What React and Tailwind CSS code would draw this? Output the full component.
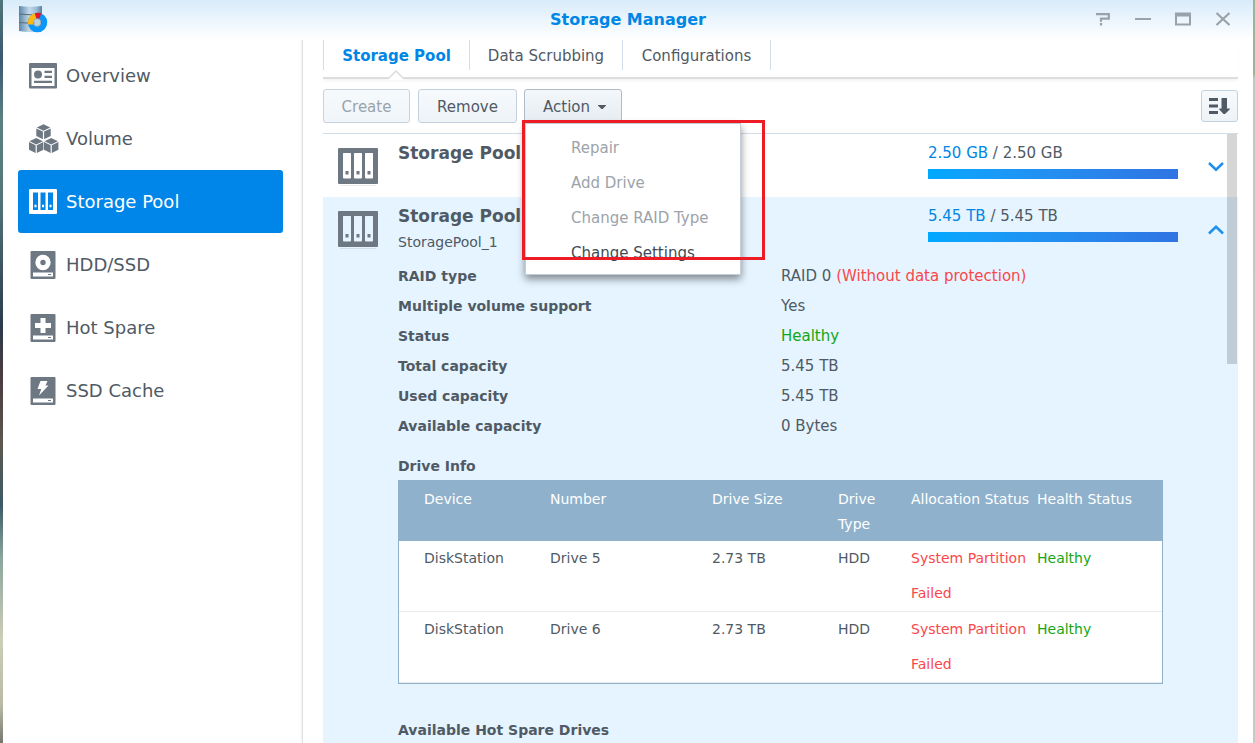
import React from "react";

const SIDEBAR_ITEMS = [
  { label: "Overview", Icon: OverviewIcon },
  { label: "Volume", Icon: VolumeIcon },
  { label: "Storage Pool", Icon: PoolIcon, active: true },
  { label: "HDD/SSD", Icon: HddIcon },
  { label: "Hot Spare", Icon: HotSpareIcon },
  { label: "SSD Cache", Icon: CacheIcon },
];

const MENU_ITEMS = [
  { label: "Repair", disabled: true },
  { label: "Add Drive", disabled: true },
  { label: "Change RAID Type", disabled: true },
  { label: "Change Settings", disabled: false },
];

const DRIVES = ["Drive 5", "Drive 6"];

function OverviewIcon() {
  return (
    <svg width="28" height="28" viewBox="0 0 28 28" fill="currentColor" aria-hidden="true">
      <path fillRule="evenodd" d="M1 1h26a1 1 0 0 1 1 1v23.500a1 1 0 0 1-1 1H1a1 1 0 0 1-1-1V2a1 1 0 0 1 1-1zM2.500 6v18h23V6z" />
      <circle cx="9" cy="12.500" r="4" />
      <path d="M15.500 8.700h7.500v2.200h-7.500zM15.500 13.700h7.500v2.200h-7.500zM5 18.700h18v2.300H5z" />
    </svg>
  );
}

function Cube({ x, y }) {
  return (
    <g transform={`translate(${x} ${y})`}>
      <path d="M7.200 0l6.700 3.200-6.700 3.200L.5 3.200z" />
      <path d="M0 4.100l6.600 3.200v7.700L0 11.800z" />
      <path d="M14.400 4.100L7.800 7.300v7.700l6.600-3.200z" />
    </g>
  );
}

function VolumeIcon() {
  return (
    <svg width="30" height="30" viewBox="0 0 30 30" fill="currentColor" aria-hidden="true">
      <Cube x={7.3} y={0.3} />
      <Cube x={0} y={14} />
      <Cube x={15} y={14} />
    </svg>
  );
}

function PoolIcon() {
  return (
    <svg width="28" height="28" viewBox="0 0 28 28" fill="currentColor" aria-hidden="true">
      <path
        fillRule="evenodd"
        d="M1 1h26a1 1 0 0 1 1 1v23a1 1 0 0 1-1 1H1a1 1 0 0 1-1-1V2a1 1 0 0 1 1-1zM4 4.500v17.500h5V4.500zM11.500 4.500v17.500h5V4.500zM19 4.500v17.500h5V4.500z"
      />
      <path d="M5.500 16.800h2v2.500h-2zM13 16.800h2v2.500h-2zM20.500 16.800h2v2.500h-2z" />
    </svg>
  );
}

function DriveBase({ children }) {
  return (
    <svg width="28" height="28" viewBox="0 0 28 28" fill="none" aria-hidden="true">
      <rect x="1.500" y="0" width="25" height="28" rx="1" fill="currentColor" />
      <rect x="4" y="21.500" width="20" height="4" fill="#fff" />
      <rect x="19" y="23" width="3" height="1" fill="currentColor" />
      {children}
    </svg>
  );
}

function HddIcon() {
  return (
    <DriveBase>
      <circle cx="14" cy="11.500" r="5.200" stroke="#fff" strokeWidth="5" />
    </DriveBase>
  );
}

function HotSpareIcon() {
  return (
    <DriveBase>
      <path d="M11.500 4h5v5H22v5h-5.500v5h-5v-5H6V9h5.500z" fill="#fff" />
    </DriveBase>
  );
}

function CacheIcon() {
  return (
    <DriveBase>
      <path d="M11.500 4h7L16.500 8.500h3L10 18.500l2.300-6.500H8.500z" fill="#fff" />
    </DriveBase>
  );
}

function PoolRowIcon() {
  return (
    <svg width="40" height="38" viewBox="0 0 40 38" className="block shrink-0 text-[#6d7883]" aria-hidden="true">
      <path d="M2 37.500h36" stroke="#000" strokeOpacity="0.080" />
      <path
        fill="currentColor"
        fillRule="evenodd"
        d="M1 0h38a1 1 0 0 1 1 1v34a1 1 0 0 1-1 1H1a1 1 0 0 1-1-1V1a1 1 0 0 1 1-1zM5.500 5a.5.5 0 0 0-.5.5v24a1 1 0 0 0 1 1h6a1 1 0 0 0 1-1v-24a.5.5 0 0 0-.5-.5zM16.500 5a.5.5 0 0 0-.5.5v24a1 1 0 0 0 1 1h6a1 1 0 0 0 1-1v-24a.5.5 0 0 0-.5-.5zM27.500 5a.5.5 0 0 0-.5.5v24a1 1 0 0 0 1 1h6a1 1 0 0 0 1-1v-24a.5.5 0 0 0-.5-.5z"
      />
      <path fill="currentColor" d="M7.500 23h3v3.500h-3zM18.500 23h3v3.500h-3zM29.500 23h3v3.500h-3z" />
    </svg>
  );
}

function AppLogo() {
  return (
    <svg width="30" height="28" viewBox="0 0 30 28" aria-hidden="true">
      <defs>
        <linearGradient id="cyl" x1="0" x2="1" y1="0" y2="0">
          <stop offset="0" stopColor="#5d86a8" />
          <stop offset="0.450" stopColor="#c3d9ea" />
          <stop offset="0.750" stopColor="#9dbdd6" />
          <stop offset="1" stopColor="#56809f" />
        </linearGradient>
      </defs>
      <path d="M0 0q11 1.500 23 0v25q-12 2-23 0z" fill="url(#cyl)" />
      <path d="M0 8q11 1.500 23 0M0 16.500q11 1.500 23 0" stroke="#5b6b78" strokeWidth="1" fill="none" />
      <circle cx="18.500" cy="16.500" r="7" fill="none" stroke="#0a97f7" strokeWidth="5.500" />
      <path d="M8.800 16.500l.3 2h5.400v-2a4 4 0 0 1 3-4l-1.700-5.300a9.700 9.700 0 0 0-7 9.300z" fill="#fbb713" />
      <path d="M15.800 7.200a9.700 9.700 0 0 1 6.400.2L20.500 12.500a4.500 4.500 0 0 0-3 0z" fill="#e5132b" />
      <circle cx="18.500" cy="16.500" r="3.200" fill="#b9d0e0" />
    </svg>
  );
}

function WindowControls() {
  return (
    <div className="flex items-center gap-3 pb-[2px] text-[#98a2ab]">
      <button type="button" aria-label="Help" className="flex size-7 items-center justify-center">
        <svg width="16" height="14" viewBox="0 0 16 14" fill="none" stroke="currentColor" strokeWidth="2.200">
          <path d="M1 2.100h12.800v4.600H6v3" />
          <path d="M6 11v2.500" />
        </svg>
      </button>
      <button type="button" aria-label="Minimize" className="flex size-7 items-center justify-center">
        <svg width="16" height="14" viewBox="0 0 16 14" fill="none" stroke="currentColor" strokeWidth="2">
          <path d="M0 7h16" />
        </svg>
      </button>
      <button type="button" aria-label="Maximize" className="flex size-7 items-center justify-center">
        <svg width="16" height="14" viewBox="0 0 16 14" fill="none" stroke="currentColor" strokeWidth="2">
          <path d="M1 1.500h14v11H1z" />
          <path d="M1 3h14" strokeWidth="3" />
        </svg>
      </button>
      <button type="button" aria-label="Close" className="flex size-7 items-center justify-center">
        <svg width="16" height="14" viewBox="0 0 16 14" fill="none" stroke="currentColor" strokeWidth="2.200">
          <path d="M1.500 1l13 12M14.500 1l-13 12" />
        </svg>
      </button>
    </div>
  );
}

function Sidebar() {
  return (
    <nav className="w-[300px] shrink-0 border-r border-[#dfe2e4] pt-1 pr-[19px] pl-[15px] shadow-[inset_-3px_0_2px_-2px_#f1f2f3]">
      {SIDEBAR_ITEMS.map(({ label, Icon, active }) => (
        <a
          key={label}
          href="#"
          className={
            active
              ? "flex h-[63px] items-center rounded-[3px] bg-[#0086e8] pl-[11px] text-lg text-white"
              : "flex h-[63px] items-center pl-[11px] text-lg text-[#505a64]"
          }
        >
          <span className={active ? "flex w-[37px] text-white" : "flex w-[37px] text-[#6d7883]"}>
            <Icon />
          </span>
          {label}
        </a>
      ))}
    </nav>
  );
}

function Tabs() {
  return (
    <div className="relative h-[39px] border-b-2 border-[#dcdddf] shadow-[0_3px_3px_-1px_#f3f3f3]">
      <div className="flex h-[30px] items-center border-l border-[#d3deea] text-[15px]">
        <button type="button" className="h-full w-[146px] border-r border-[#d3deea] pt-[2px] font-bold text-[#0086e5]">
          Storage Pool
        </button>
        <button type="button" className="h-full w-[153px] border-r border-[#d3deea] pt-[2px]">
          Data Scrubbing
        </button>
        <button type="button" className="h-full w-[148px] border-r border-[#d3deea] pt-[2px]">
          Configurations
        </button>
      </div>
      <svg className="absolute top-[30px] left-[64px]" width="18" height="10" viewBox="0 0 18 10" aria-hidden="true">
        <path d="M0 10L9 1l9 9z" fill="#fff" />
        <path d="M0 8.500h1.500L9 1l7.500 7.500H18" fill="none" stroke="#dcdddf" strokeWidth="1.500" />
      </svg>
    </div>
  );
}

function ActionMenu() {
  return (
    <div className="relative">
      <button
        type="button"
        aria-haspopup="menu"
        aria-expanded="true"
        className="flex h-[34px] w-[98px] items-center gap-2 rounded-t-[3px] border border-[#b0bcc8] bg-linear-to-b from-[#f3f7fa] to-[#e6ecf1] pt-[2px] pl-[18px]"
      >
        Action
        <svg width="8" height="4" viewBox="0 0 8 4" fill="currentColor" aria-hidden="true">
          <path d="M0 0h8v.6L4.600 4H3.400L0 .6z" />
        </svg>
      </button>
      <div
        role="menu"
        className="absolute top-[34px] left-px z-10 w-[216px] border border-[#c3ced9] bg-white pt-[7px] pb-[3px] shadow-[0_4px_8px_rgba(0,0,0,0.45)]"
      >
        {MENU_ITEMS.map(({ label, disabled }) => (
          <button
            key={label}
            type="button"
            role="menuitem"
            disabled={disabled}
            className="block h-[35px] w-full pl-[45px] text-left text-[#414b55] disabled:text-[#9ca3aa]"
          >
            {label}
          </button>
        ))}
      </div>
      <div className="pointer-events-none absolute top-[31px] -left-[2px] z-20 h-[140px] w-[243px] border-3 border-[#ed1c24]" />
    </div>
  );
}

function Toolbar() {
  return (
    <div className="flex items-center pt-[10px] pb-[10px] text-[15px]">
      <button
        type="button"
        disabled
        className="mr-2 h-[34px] w-[87px] rounded-[3px] border border-[#c6d2de] bg-linear-to-b from-[#f6fafd] to-[#f0f5f9] pt-[2px] text-[#9ba3ab]"
      >
        Create
      </button>
      <button
        type="button"
        className="mr-[7px] h-[34px] w-[99px] rounded-[3px] border border-[#c3d0dd] bg-linear-to-b from-[#f6fafd] to-[#eef3f8] pt-[2px]"
      >
        Remove
      </button>
      <ActionMenu />
      <button
        type="button"
        aria-label="Sort"
        className="ml-auto flex h-8 w-[37px] items-center justify-center rounded-[3px] border border-[#c3d0dd] bg-linear-to-b from-[#f6fafd] to-[#eef3f8]"
      >
        <svg width="21" height="16" viewBox="0 0 21 16" fill="currentColor" aria-hidden="true">
          <path d="M0 0h9v3H0zM0 6.500h9v3H0zM0 13h9v3H0zM12.500 0h5.500v10.500h2.700v1L16 16h-1.500l-4.200-4.500v-1h2.200z" />
        </svg>
      </button>
    </div>
  );
}

function PoolHeader({ title, subtitle, used, total, expanded }) {
  return (
    <div className="flex h-[63px] items-start pr-[14px] pl-[15px]">
      <div className="pt-[14px]">
        <PoolRowIcon />
      </div>
      <div className="flex-1 pt-[7px] pl-5">
        <h2 className="text-[17px] leading-6 font-bold">{title}</h2>
        {subtitle && <p className="text-sm leading-7">{subtitle}</p>}
      </div>
      <div className="w-[250px] pt-[9px] text-[15px] leading-5">
        <span className="text-[#0086e5]">{used}</span> / {total}
        <div className="mt-[6px] h-[10px] bg-linear-to-r from-[#00a8ff] to-[#2f74e2]" />
      </div>
      <button
        type="button"
        aria-label={expanded ? "Collapse" : "Expand"}
        className="mt-[24px] ml-[30px] flex h-[18px] w-4 items-center text-[#1e8fec]"
      >
        <svg width="16" height="10" viewBox="0 0 16 10" fill="none" stroke="currentColor" strokeWidth="2.500" aria-hidden="true">
          {expanded ? <path d="M1 8.500L8 1.800l7 6.700" /> : <path d="M1 1l7 6.700L15 1" />}
        </svg>
      </button>
    </div>
  );
}

function Detail({ label, children }) {
  return (
    <div className="flex h-[30px] items-center">
      <dt className="w-[383px] text-sm font-bold">{label}</dt>
      <dd className="text-[15px]">{children}</dd>
    </div>
  );
}

function DriveTable() {
  return (
    <table className="w-full table-fixed border-separate border-spacing-0 border border-[#8fb1cc] bg-white text-left text-sm">
      <colgroup>
        <col className="w-[151px]" />
        <col className="w-[162px]" />
        <col className="w-[126px]" />
        <col className="w-[73px]" />
        <col className="w-[126px]" />
        <col />
      </colgroup>
      <thead>
        <tr className="bg-[#8fb1cc] align-top leading-[25px] text-white [&>th]:pt-[6px] [&>th]:pb-[4px] [&>th]:font-normal">
          <th className="pl-[25px]">Device</th>
          <th>Number</th>
          <th>Drive Size</th>
          <th className="pr-6">Drive Type</th>
          <th className="whitespace-nowrap">Allocation Status</th>
          <th>Health Status</th>
        </tr>
      </thead>
      <tbody>
        {DRIVES.map((drive) => (
          <tr key={drive} className="align-top leading-[35px] [&>td]:border-b [&>td]:border-[#e8eaec]">
            <td className="pl-[25px]">DiskStation</td>
            <td>{drive}</td>
            <td>2.73 TB</td>
            <td>HDD</td>
            <td className="text-[#f9474a]">System Partition Failed</td>
            <td className="text-[#16a516]">Healthy</td>
          </tr>
        ))}
      </tbody>
    </table>
  );
}

function PoolList() {
  return (
    <section className="relative min-h-0 flex-1 overflow-hidden border-t border-[#d0dce8]">
      <PoolHeader title="Storage Pool 1" used="2.50 GB" total="2.50 GB" />
      <div className="min-h-full bg-[#e5f4ff]">
        <PoolHeader title="Storage Pool 2" subtitle="StoragePool_1" used="5.45 TB" total="5.45 TB" expanded />
        <div className="px-[75px]">
          <dl className="pt-px">
            <Detail label="RAID type">
              RAID 0 <span className="text-[#f9474a]">(Without data protection)</span>
            </Detail>
            <Detail label="Multiple volume support">Yes</Detail>
            <Detail label="Status">
              <span className="text-[#16a516]">Healthy</span>
            </Detail>
            <Detail label="Total capacity">5.45 TB</Detail>
            <Detail label="Used capacity">5.45 TB</Detail>
            <Detail label="Available capacity">0 Bytes</Detail>
          </dl>
          <h3 className="pt-[13px] pb-px text-sm leading-[25px] font-bold">Drive Info</h3>
          <DriveTable />
          <h3 className="pt-[34px] text-sm leading-[25px] font-bold">Available Hot Spare Drives</h3>
        </div>
      </div>
      <div className="absolute top-0 right-px h-[230px] w-[10px] bg-black/16" />
    </section>
  );
}

export default function App() {
  return (
    <div className="flex h-screen overflow-hidden bg-white font-['DejaVu_Sans',sans-serif] text-[#505a64]">
      <div className="w-[3px] shrink-0 bg-[linear-gradient(to_bottom,#4f7678_0%,#3d5872_8%,#5b8082_16%,#55777c_26%,#2c3a4b_44%,#4c3c40_51%,#5c5850_60%,#3c5a66_68%,#8ba59c_75%,#cdceb8_86%,#b9b9a6_95%,#77766c_100%)]" />
      <div className="flex min-w-0 flex-1 flex-col bg-white">
        <header className="grid h-10 shrink-0 grid-cols-[1fr_auto_1fr] items-center bg-linear-to-b from-[#d8ebfa] to-white px-4">
          <AppLogo />
          <h1 className="text-base font-bold text-[#0086e5]">Storage Manager</h1>
          <div className="flex justify-end">
            <WindowControls />
          </div>
        </header>
        <div className="flex min-h-0 flex-1">
          <Sidebar />
          <main className="flex min-w-0 flex-1 flex-col pr-[15px] pl-5">
            <Tabs />
            <Toolbar />
            <PoolList />
          </main>
        </div>
      </div>
      <div className="w-[2px] shrink-0 bg-[linear-gradient(to_bottom,#9db596_0%,#9db596_10%,#c3c6c9_10.5%,#c9c9c9_100%)]" />
    </div>
  );
}
